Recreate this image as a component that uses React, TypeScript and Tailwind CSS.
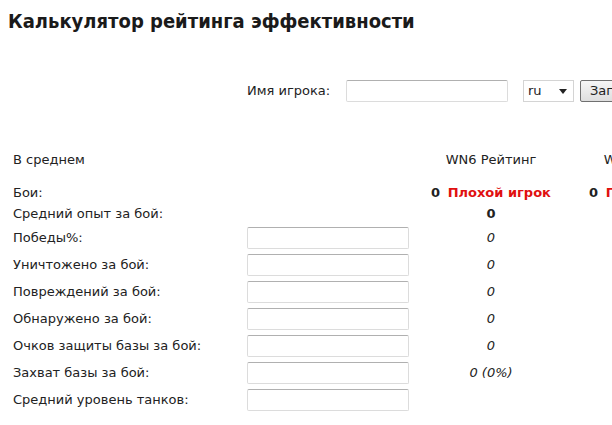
import React from 'react';

const font = { fontFamily: '"DejaVu Sans", Verdana, sans-serif' };
const titleFont = { fontFamily: '"DejaVu Sans Condensed", "DejaVu Sans", Verdana, sans-serif', fontStretch: 'condensed' };

const inputRows: { label: string; value: string }[] = [
  { label: 'Победы%:', value: '0' },
  { label: 'Уничтожено за бой:', value: '0' },
  { label: 'Повреждений за бой:', value: '0' },
  { label: 'Обнаружено за бой:', value: '0' },
  { label: 'Очков защиты базы за бой:', value: '0' },
  { label: 'Захват базы за бой:', value: '0 (0%)' },
  { label: 'Средний уровень танков:', value: '' },
];

const Field = () => (
  <div className="shrink-0 w-[162px] h-[22px] rounded-[2px] border border-[#dcdcdc] border-t-[#b0b0b0] bg-white" />
);

export default function App() {
  return (
    <div className="w-[612px] h-[425px] overflow-hidden bg-white text-[13px] text-[#222]" style={font}>
      <h1 className="pl-[8px] pt-[8px] text-[20px] leading-[26px] font-bold text-[#1a1a1a] whitespace-nowrap" style={titleFont}>
        Калькулятор рейтинга эффективности
      </h1>

      <div className="flex items-center h-[22px] mt-[46px] whitespace-nowrap">
        <span className="shrink-0 ml-[247px] w-[99px]">Имя игрока:</span>
        <Field />
        <div className="shrink-0 ml-[15px] w-[51px] h-[22px] border border-[#d4d4d4] bg-white flex items-center pl-[4px] pr-[6px] justify-between">
          <span>ru</span>
          <svg width="8" height="5" viewBox="0 0 8 5"><path d="M0 0h8L4 5z" fill="#222" /></svg>
        </div>
        <div className="shrink-0 ml-[6px] h-[22px] pl-[9px] pr-[8px] border border-[#707070] rounded-[2px] bg-gradient-to-b from-[#f6f6f6] to-[#dedede] flex items-center">
          Загрузить
        </div>
      </div>

      <div className="mt-[48px] whitespace-nowrap">
        <div className="flex items-center h-[20px]">
          <span className="shrink-0 pl-[13px] w-[414px]">В среднем</span>
          <span className="shrink-0 w-[154px] text-center">WN6 Рейтинг</span>
          <span className="shrink-0 w-[162px] text-center">WN7 Рейтинг</span>
        </div>
        <div className="h-[12px]" />
        <div className="flex items-center h-[21px]">
          <span className="shrink-0 pl-[13px] w-[414px]">Бои:</span>
          <span className="shrink-0 w-[154px] text-center font-bold">
            0 <span className="ml-[3px] text-[#e01010]">Плохой игрок</span>
          </span>
          <span className="shrink-0 w-[162px] text-center font-bold">
            0 <span className="ml-[3px] text-[#e01010]">Плохой игрок</span>
          </span>
        </div>
        <div className="flex items-center h-[21px]">
          <span className="shrink-0 pl-[13px] w-[414px]">Средний опыт за бой:</span>
          <span className="shrink-0 w-[154px] text-center font-bold">0</span>
        </div>
        {inputRows.map((r) => (
          <div key={r.label} className="flex items-center h-[27px]">
            <span className="shrink-0 pl-[13px] w-[247px]">{r.label}</span>
            <Field />
            <span className="shrink-0 ml-[5px] w-[154px] text-center italic">{r.value}</span>
          </div>
        ))}
      </div>
    </div>
  );
}
